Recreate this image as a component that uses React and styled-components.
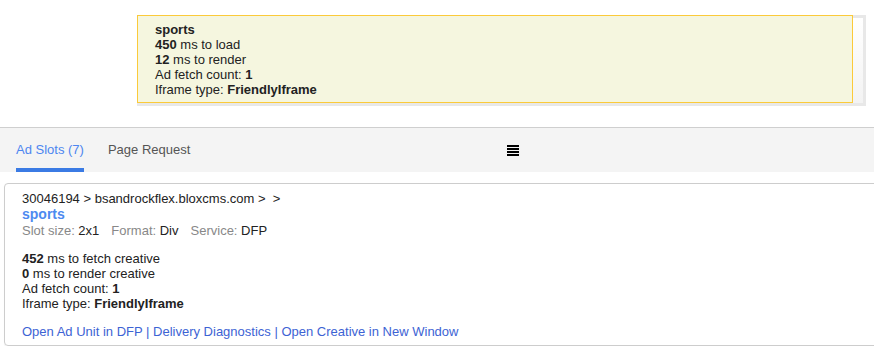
import React from 'react'
import styled, { createGlobalStyle } from 'styled-components'

const GlobalStyle = createGlobalStyle`
  body {
    margin: 0;
    background: #fff;
    font-family: "Liberation Sans", Arial, sans-serif;
    font-size: 13px;
    line-height: 15px;
    color: #222;
    overflow-x: hidden;
  }
`

const TopArea = styled.div`
  padding-top: 15px;
  height: 112px;
`

const Frame = styled.div`
  margin-left: 137px;
  width: 726px;
  border: 3px solid #e8e8e8;
  border-left: none;
  background: linear-gradient(#fff, #f3f3f3);
`

const Summary = styled.div`
  box-sizing: border-box;
  margin-top: -3px;
  width: 716px;
  height: 88px;
  padding: 6px 0 4px 17px;
  background: #f5f6df;
  border: 1px solid #fbca3a;
`

const Line = styled.div`
  white-space: nowrap;
`

const TabBar = styled.div`
  display: flex;
  align-items: stretch;
  height: 44px;
  background: #f4f4f4;
  border-top: 1px solid #cfcfcf;
  padding-left: 16px;
`

const Tab = styled.div`
  padding-top: 14px;
  margin-right: 24px;
  color: ${(p) => (p.active ? '#4d86f0' : '#555')};
  box-shadow: ${(p) => (p.active ? 'inset 0 -4px 0 #3b7be4' : 'none')};
`

const MenuIcon = styled.div`
  margin-left: 293px;
  padding-top: 17px;
  line-height: 0;
`

const Card = styled.div`
  margin: 11px -8px 0 4px;
  border: 1px solid #cdcdcd;
  border-radius: 4px;
  box-shadow: 0 1px 1px rgba(0, 0, 0, 0.06);
  padding: 7px 17px 6px;
`

const Crumbs = styled.div`
  white-space: nowrap;
`

const SlotName = styled.div`
  font-weight: bold;
  font-size: 14px;
  line-height: 17px;
  color: #4d8af0;
`

const Meta = styled.div`
  white-space: nowrap;
`

const Label = styled.span`
  color: #888;
`

const Value = styled.span`
  color: #222;
  margin-right: 12px;
`

const Stats = styled.div`
  margin-top: 13px;
`

const Links = styled.div`
  margin-top: 13px;
  color: #3d63d4;
  white-space: nowrap;
`

const LinkItem = styled.a`
  color: inherit;
  text-decoration: none;
  cursor: pointer;
`

function Hamburger() {
  return (
    <svg width="12" height="11" viewBox="0 0 12 11">
      <rect x="0" y="0" width="12" height="2" fill="#000" />
      <rect x="0" y="3" width="12" height="2" fill="#000" />
      <rect x="0" y="6" width="12" height="2" fill="#000" />
      <rect x="0" y="9" width="12" height="2" fill="#000" />
    </svg>
  )
}

export default function App() {
  return (
    <>
      <GlobalStyle />
      <TopArea>
        <Frame>
          <Summary>
            <Line><b>sports</b></Line>
            <Line><b>450</b> ms to load</Line>
            <Line><b>12</b> ms to render</Line>
            <Line>Ad fetch count: <b>1</b></Line>
            <Line>Iframe type: <b>FriendlyIframe</b></Line>
          </Summary>
        </Frame>
      </TopArea>

      <TabBar>
        <Tab active>Ad Slots (7)</Tab>
        <Tab>Page Request</Tab>
        <MenuIcon>
          <Hamburger />
        </MenuIcon>
      </TabBar>

      <Card>
        <Crumbs>30046194 &gt; bsandrockflex.bloxcms.com &gt; &nbsp;&gt;</Crumbs>
        <SlotName>sports</SlotName>
        <Meta>
          <Label>Slot size: </Label><Value>2x1</Value>
          <Label>Format: </Label><Value>Div</Value>
          <Label>Service: </Label><Value>DFP</Value>
        </Meta>
        <Stats>
          <Line><b>452</b> ms to fetch creative</Line>
          <Line><b>0</b> ms to render creative</Line>
          <Line>Ad fetch count: <b>1</b></Line>
          <Line>Iframe type: <b>FriendlyIframe</b></Line>
        </Stats>
        <Links>
          <LinkItem>Open Ad Unit in DFP</LinkItem> | <LinkItem>Delivery Diagnostics</LinkItem> |{' '}
          <LinkItem>Open Creative in New Window</LinkItem>
        </Links>
      </Card>
    </>
  )
}
